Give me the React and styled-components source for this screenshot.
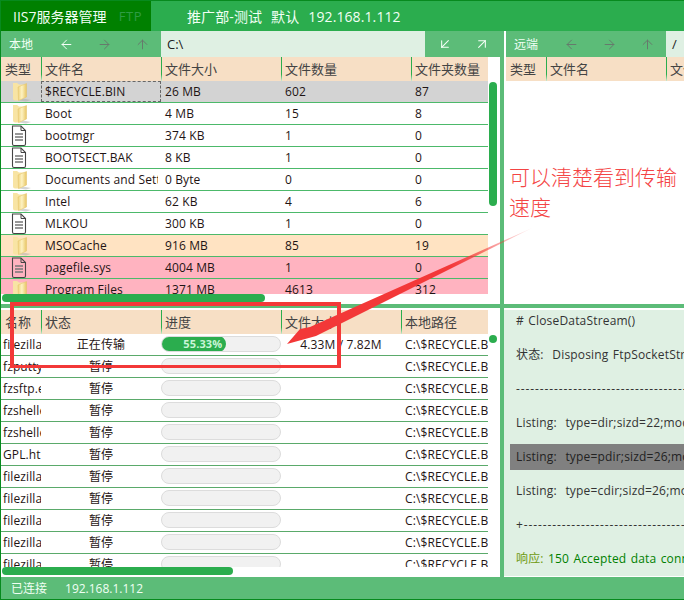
import React from "react";
import styled, { createGlobalStyle } from "styled-components";
import { ArrowLeft, ArrowRight, ArrowUp, ArrowDownLeft, ArrowUpRight } from "lucide-react";

const Global = createGlobalStyle`
  html, body { margin: 0; padding: 0; background: #fff; }
  body { font-family: "Open Sans", "Noto Sans CJK SC", sans-serif; }
  * { box-sizing: border-box; }
`;

const GREEN = "#5cbc78";
const VIVID = "#2bad4e";

const Page = styled.div`
  position: relative;
  width: 684px;
  height: 600px;
  overflow: hidden;
  display: flex;
  flex-direction: column;
  border-left: 1px solid #078a1e;
  border-bottom: 1px solid #078a1e;
  font-size: 12px;
  color: #222;
`;
const TitleBar = styled.header`
  height: 31px;
  flex: none;
  display: flex;
  background: ${VIVID};
  border-top: 1px solid #078a1e;
  margin-left: -1px;
  color: #f2fff5;
  font-size: 14px;
`;
const Brand = styled.div`
  width: 151px;
  background: #008000;
  display: flex;
  align-items: center;
  justify-content: space-between;
  padding: 0 9px 0 13px;
`;
const Ftp = styled.span`
  font-size: 13px;
  letter-spacing: 0.5px;
  color: #2f9c45;
`;
const Session = styled.div`
  display: flex;
  align-items: center;
  gap: 9px;
  padding-left: 36px;
  letter-spacing: 0.1px;
`;
const Workspace = styled.div`
  flex: 1;
  display: grid;
  grid-template-columns: 499px 4px 180px;
  grid-template-rows: 273px 4px 269px;
  min-height: 0;
`;
const HBar = styled.div`
  grid-column: 1 / 4;
  background: ${GREEN};
`;
const VBar = styled.div`
  background: ${GREEN};
`;
const Pane = styled.section`
  position: relative;
  min-width: 0;
  overflow: hidden;
  display: flex;
  flex-direction: column;
  padding-left: ${(p) => p.$left || 0}px;
  padding-top: ${(p) => p.$top || 0}px;
`;
const Toolbar = styled.div`
  height: 26px;
  flex: none;
  display: flex;
`;
const NavGroup = styled.div`
  width: 160px;
  flex: none;
  display: flex;
  align-items: center;
  background: ${GREEN};
  color: #f0fff4;
  padding-left: 8px;
`;
const NavLabel = styled.span`
  width: 40px;
  font-size: 12px;
`;
const NavBtn = styled.span`
  width: 40px;
  display: flex;
  justify-content: center;
  color: ${(p) => (p.$on ? "#f5fff7" : "#667a6c")};
`;
const PathBox = styled.div`
  flex: 1;
  background: #dff0e3;
  display: flex;
  align-items: center;
  padding-left: 6px;
  font-size: 13px;
  color: #222;
  min-width: 0;
`;
const ActionGroup = styled.div`
  width: 75px;
  flex: none;
  display: flex;
  align-items: center;
  background: ${GREEN};
  color: #f5fff7;
  padding-left: 1px;
`;
const ActionBtn = styled.span`
  width: 37px;
  display: flex;
  justify-content: center;
`;
const Head = styled.div`
  height: 24px;
  flex: none;
  display: grid;
  grid-template-columns: ${(p) => p.$cols};
  width: ${(p) => p.$w || 487}px;
  background: #f7dfc5;
  font-size: 13px;
  color: #444;
`;
const HeadCell = styled.div`
  display: flex;
  align-items: center;
  padding: 0 0 2px ${(p) => (p.$first ? 4 : 3)}px;
  white-space: nowrap;
  overflow: hidden;
  border-left: ${(p) => (p.$first ? "none" : "1px solid")};
  border-image: ${(p) => (p.$first ? "none" : `linear-gradient(${VIVID} 70%, #e8f5e8) 1`)};
`;
const Rows = styled.div`
  width: 487px;
  height: ${(p) => p.$h}px;
  flex: none;
  overflow: hidden;
`;
const Row = styled.div`
  height: 22px;
  display: grid;
  grid-template-columns: ${(p) => p.$cols};
  align-items: center;
  border-bottom: 1px solid ${(p) => p.$line};
  background: ${(p) => p.$bg || "transparent"};
  color: #1f1414;
  font-size: 12px;
  letter-spacing: 0.12px;
`;
const IconCell = styled.div`
  height: 21px;
  display: flex;
  align-items: center;
  padding-left: 10px;
`;
const TextCell = styled.div`
  height: 21px;
  line-height: 21px;
  padding: 0 ${(p) => p.$right || 0}px 0 ${(p) => p.$pad ?? 4}px;
  white-space: nowrap;
  overflow: hidden;
  text-align: ${(p) => p.$align || "left"};
`;
const Clip = styled.div`
  overflow: hidden;
`;
const FocusCell = styled(TextCell)`
  outline: 1px dashed #666;
  outline-offset: -1px;
`;
const Track = styled.div`
  height: 16px;
  margin-top: -1px;
  border-radius: 8px;
  border: 1px solid #dcdcdc;
  background: #f1f1f1;
  overflow: hidden;
`;
const Fill = styled.div`
  height: 16px;
  margin: -1px 0 0 -1px;
  padding-right: 4px;
  background: ${VIVID};
  border-radius: 8px;
  color: #c9f5d6;
  font-size: 11px;
  font-weight: 700;
  line-height: 16px;
  text-align: right;
`;
const HScroll = styled.div`
  height: 10px;
  flex: none;
  padding: 0 0 2px 1px;
`;
const Thumb = styled.div`
  height: 8px;
  width: ${(p) => p.$w}px;
  background: ${VIVID};
  border-radius: 4px;
`;
const VThumb = styled.div`
  position: absolute;
  left: 488px;
  top: ${(p) => p.$top}px;
  width: 8px;
  height: ${(p) => p.$h}px;
  background: ${VIVID};
  border-radius: 4px;
`;
const Log = styled.div`
  margin-top: 2px;
  height: 266px;
  background: #dff0e3;
  display: flex;
  flex-direction: column;
  gap: 12px;
  overflow: hidden;
  font-size: 12px;
  color: #333;
  letter-spacing: 0.18px;
`;
const LogLine = styled.div`
  height: 22px;
  line-height: 22px;
  padding-left: 12px;
  white-space: nowrap;
  flex: none;
  word-spacing: 1px;
`;
const DashLine = styled(LogLine)`
  letter-spacing: 0.9px;
`;
const LogHit = styled(LogLine)`
  height: 26px;
  line-height: 26px;
  margin: -2px 0 -2px 6px;
  padding-left: 6px;
  background: #808080;
  color: #222;
`;
const Reply = styled(LogLine)`
  color: #008000;
`;
const ReplyTag = styled.span`
  color: #6f9a10;
`;
const StatusBar = styled.footer`
  height: 22px;
  flex: none;
  display: flex;
  align-items: center;
  gap: 18px;
  padding-left: 10px;
  background: ${GREEN};
  color: #effff3;
  font-size: 12px;
`;
const Note = styled.div`
  position: absolute;
  left: 508px;
  top: 161px;
  width: 172px;
  font-size: 21px;
  line-height: 30px;
  font-weight: 300;
  color: #f44444;
  font-family: "Noto Sans CJK SC", sans-serif;
`;
const RedBox = styled.div`
  position: absolute;
  left: 9px;
  top: 302px;
  width: 331px;
  height: 66px;
  border: 4px solid #f33838;
  border-bottom-width: 3px;
  pointer-events: none;
`;
const ArrowLayer = styled.svg`
  position: absolute;
  left: -1px;
  top: 0;
  pointer-events: none;
`;

const FolderIcon = () => (
  <svg width="20" height="20" viewBox="0 0 20 20">
    <defs>
      <linearGradient id="fg" x1="0" y1="0" x2="1" y2="0">
        <stop offset="0" stopColor="#f0d27c" />
        <stop offset="0.45" stopColor="#fdf2c2" />
        <stop offset="1" stopColor="#e8c665" />
      </linearGradient>
    </defs>
    <path d="M9 16 L20 18 L15 19.5 L8 18.5Z" fill="#aaa" opacity="0.5" />
    <path d="M2 1 H6 L8 2.5 H15 V15 L8 18.5 H4 Q2 18.5 2 16.5Z" fill="#f8e4a4" />
    <path d="M7 5 L15.5 1.5 V15 L7.5 18.5Z" fill="url(#fg)" stroke="#e2c368" strokeWidth="0.5" />
  </svg>
);
const FileIcon = ({ tint }) => (
  <svg width="16" height="22" viewBox="0 0 16 22">
    <path d="M1.5 1 H10 L14.5 5.5 V19 Q14.5 20.5 13 20.5 H3 Q1.5 20.5 1.5 19Z" fill={tint || "#fff"} stroke="#444" strokeWidth="1.1" />
    <path d="M10 1 V5.5 H14.5" fill="none" stroke="#444" strokeWidth="1" />
    <path d="M4 9 H12 M4 12 H12 M4 15 H12" stroke="#777" strokeWidth="1.4" />
  </svg>
);

const fileCols = "40px 120px 120px 130px 77px";
const transferCols = "40px 120px 120px 120px 87px";
const remoteCols = "40px 120px 20px";

const files = [
  ["f", "$RECYCLE.BIN", "26 MB", "602", "87", "#d3d3d3", true],
  ["f", "Boot", "4 MB", "15", "8"],
  ["d", "bootmgr", "374 KB", "1", "0"],
  ["d", "BOOTSECT.BAK", "8 KB", "1", "0"],
  ["f", "Documents and Settings", "0 Byte", "0", "0"],
  ["f", "Intel", "62 KB", "4", "6"],
  ["d", "MLKOU", "300 KB", "1", "0"],
  ["f", "MSOCache", "916 MB", "85", "19", "#ffe3c2"],
  ["d", "pagefile.sys", "4004 MB", "1", "0", "#ffb3c0"],
  ["f", "Program Files", "1371 MB", "4613", "312", "#ffb3c0"],
];
const names = ["filezilla.exe", "fzputty.exe", "fzsftp.exe", "fzshellext.dll", "fzshellext_64.dll", "GPL.html", "filezilla", "filezilla", "filezilla", "filezilla", "filezilla"];

export default function App() {
  return (
    <Page>
      <Global />
      <TitleBar>
        <Brand>
          <span>IIS7服务器管理</span>
          <Ftp>FTP</Ftp>
        </Brand>
        <Session>
          <span>推广部-测试</span>
          <span>默认</span>
          <span>192.168.1.112</span>
        </Session>
      </TitleBar>
      <Workspace>
        <Pane>
          <Toolbar>
            <NavGroup>
              <NavLabel>本地</NavLabel>
              <NavBtn $on><ArrowLeft size={15} strokeWidth={1.6} /></NavBtn>
              <NavBtn><ArrowRight size={15} strokeWidth={1.6} /></NavBtn>
              <NavBtn><ArrowUp size={15} strokeWidth={1.6} /></NavBtn>
            </NavGroup>
            <PathBox>C:\</PathBox>
            <ActionGroup>
              <ActionBtn><ArrowDownLeft size={16} strokeWidth={1.6} /></ActionBtn>
              <ActionBtn><ArrowUpRight size={16} strokeWidth={1.6} /></ActionBtn>
            </ActionGroup>
          </Toolbar>
          <Head $cols={fileCols}>
            <HeadCell $first>类型</HeadCell>
            <HeadCell>文件名</HeadCell>
            <HeadCell>文件大小</HeadCell>
            <HeadCell>文件数量</HeadCell>
            <HeadCell>文件夹数量</HeadCell>
          </Head>
          <Rows $h={213}>
            {files.map(([kind, name, size, count, dirs, bg, focus]) => {
              const Name = focus ? FocusCell : TextCell;
              return (
                <Row key={name} $cols={fileCols} $bg={bg} $line="#4cb96a">
                  <IconCell>{kind === "f" ? <FolderIcon /> : <FileIcon tint={bg} />}</IconCell>
                  <Name $right={3}><Clip>{name}</Clip></Name>
                  <TextCell>{size}</TextCell>
                  <TextCell>{count}</TextCell>
                  <TextCell>{dirs}</TextCell>
                </Row>
              );
            })}
          </Rows>
          <HScroll><Thumb $w={263} /></HScroll>
          <VThumb $top={51} $h={124} />
        </Pane>
        <VBar />
        <Pane $left={2}>
          <Toolbar>
            <NavGroup>
              <NavLabel>远端</NavLabel>
              <NavBtn><ArrowLeft size={15} strokeWidth={1.6} /></NavBtn>
              <NavBtn><ArrowRight size={15} strokeWidth={1.6} /></NavBtn>
              <NavBtn><ArrowUp size={15} strokeWidth={1.6} /></NavBtn>
            </NavGroup>
            <PathBox>/</PathBox>
          </Toolbar>
          <Head $cols={remoteCols} $w={178}>
            <HeadCell $first>类型</HeadCell>
            <HeadCell>文件名</HeadCell>
            <HeadCell>文件大小</HeadCell>
          </Head>
        </Pane>
        <HBar />
        <Pane $top={2}>
          <Head $cols={transferCols}>
            <HeadCell $first>名称</HeadCell>
            <HeadCell>状态</HeadCell>
            <HeadCell>进度</HeadCell>
            <HeadCell>文件大小</HeadCell>
            <HeadCell>本地路径</HeadCell>
          </Head>
          <Rows $h={233}>
            {names.map((n, i) => (
              <Row key={i} $cols={transferCols} $line="#5aaa6a">
                <TextCell $pad={2}>{n}</TextCell>
                <TextCell $pad={0} $align="center">{i === 0 ? "正在传输" : "暂停"}</TextCell>
                <Track>
                  {i === 0 && <Fill style={{ width: "55.33%" }}>55.33%</Fill>}
                </Track>
                <TextCell $pad={0} $align="center">{i === 0 ? "4.33M / 7.82M" : ""}</TextCell>
                <TextCell>C:\$RECYCLE.BIN\filezilla</TextCell>
              </Row>
            ))}
          </Rows>
          <HScroll><Thumb $w={231} /></HScroll>
          <VThumb $top={27} $h={8} />
        </Pane>
        <VBar />
        <Pane>
          <Log>
            <LogLine># CloseDataStream()</LogLine>
            <LogLine>状态:&nbsp;&nbsp;Disposing FtpSocketStream...</LogLine>
            <DashLine>---------------------------------------------</DashLine>
            <LogLine>Listing:&nbsp;&nbsp;type=dir;sizd=22;modify=2017</LogLine>
            <LogHit>Listing:&nbsp;&nbsp;type=pdir;sizd=26;modify=2017</LogHit>
            <LogLine>Listing:&nbsp;&nbsp;type=cdir;sizd=26;modify=2017</LogLine>
            <DashLine>+--------------------------------------------</DashLine>
            <Reply><ReplyTag>响应:</ReplyTag> 150 Accepted data connection</Reply>
          </Log>
        </Pane>
      </Workspace>
      <StatusBar>
        <span>已连接</span>
        <span>192.168.1.112</span>
      </StatusBar>
      <Note>可以清楚看到传输速度</Note>
      <RedBox />
      <ArrowLayer width="684" height="600" viewBox="0 0 684 600">
        <defs>
          <linearGradient id="tail" gradientUnits="userSpaceOnUse" x1="532" y1="228" x2="450" y2="268">
            <stop offset="0" stopColor="#f33838" stopOpacity="0.1" />
            <stop offset="1" stopColor="#f33838" />
          </linearGradient>
        </defs>
        <polygon points="287,344 300,329 310,327 532,228 316,336" fill="url(#tail)" />
      </ArrowLayer>
    </Page>
  );
}
